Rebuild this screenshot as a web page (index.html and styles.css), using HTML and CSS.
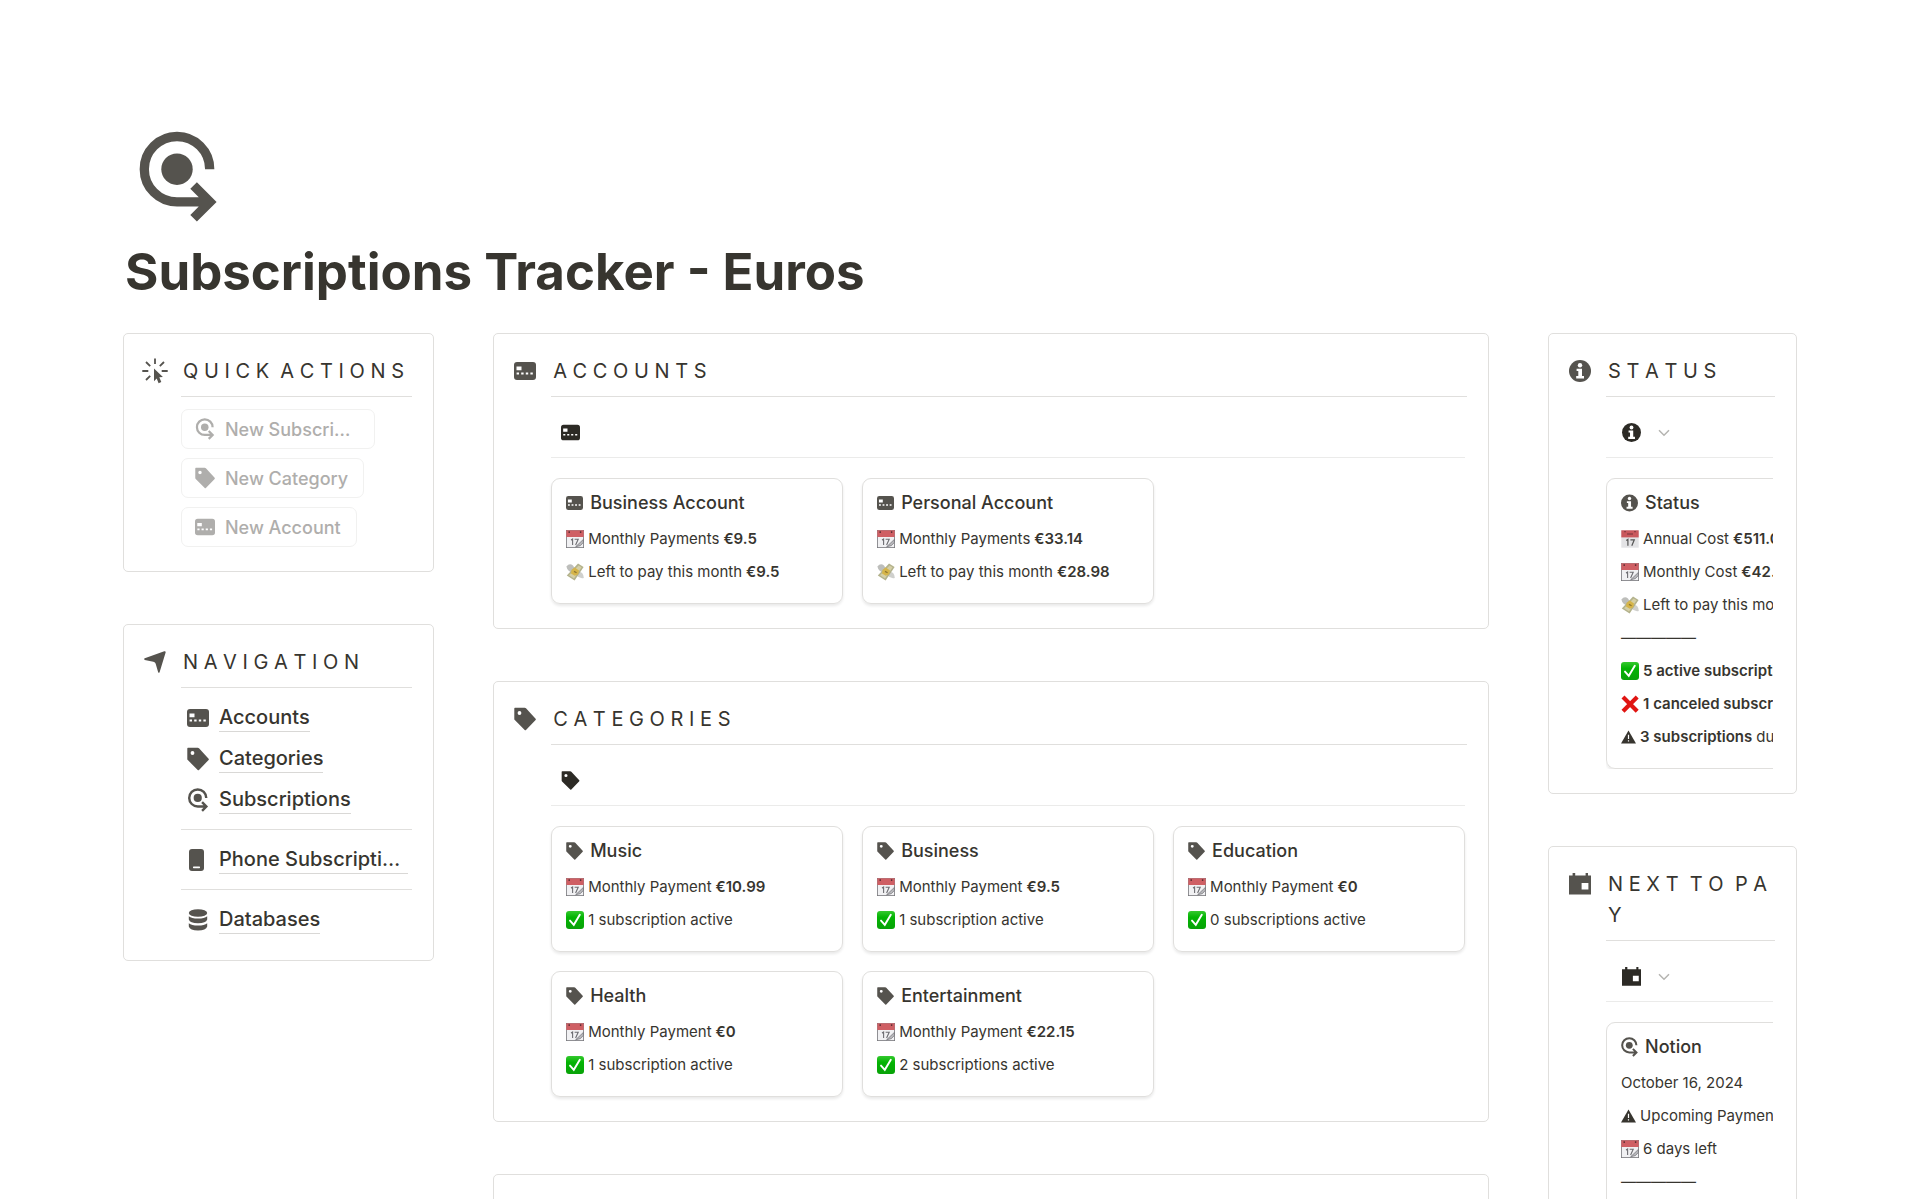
FILE: index.html
```html
<!DOCTYPE html>
<html lang="en">
<head>
    <meta charset="UTF-8">
    <meta name="viewport" content="width=device-width, initial-scale=1.0">
    <title>Subscriptions Tracker - Euros</title>
    <link rel="stylesheet" href="styles.css">
</head>
<body>

    <!-- Icon set -->
    <svg class="sprite" aria-hidden="true">
        <defs>
            <linearGradient id="green" x1="0" y1="0" x2="0" y2="1">
                <stop offset="0" stop-color="#35c92f"/>
                <stop offset="0.35" stop-color="#04b404"/>
                <stop offset="1" stop-color="#08a208"/>
            </linearGradient>
        </defs>
        <symbol id="subscription" viewBox="0 0 78 92">
            <path d="M70.7 38.2A32.7 32.7 0 1 0 38 70.9H70M54.6 54.5L71 70.9L54.6 87.3" fill="none" stroke="currentColor" stroke-width="9.3"/>
            <circle cx="38" cy="38.2" r="15.7" fill="currentColor"/>
        </symbol>
        <symbol id="card" viewBox="0 0 22 18">
            <rect width="22" height="18" rx="3" fill="currentColor"/>
            <path d="M2.5 4.5h5v3.7h-5zM2.6 10.6h2.4v2h-2.4zM7.2 10.6h2.4v2h-2.4zM11.8 10.6h2.4v2h-2.4zM16.4 10.6h2.4v2h-2.4z" fill="#fff"/>
        </symbol>
        <symbol id="tag" viewBox="0 0 22 23">
            <path fill="currentColor" fill-rule="evenodd" d="M1 0.3H10.7Q11.5 0.3 12 0.8L21.6 11.3Q22.1 11.9 21.6 12.5L12 22.4Q11.3 23 10.7 22.4L0.8 12.6Q0.3 12.1 0.3 11.4V1Q0.3 0.3 1 0.3zM5.5 3.6A1.9 1.9 0 1 0 5.5 7.4A1.9 1.9 0 1 0 5.5 3.6z"/>
        </symbol>
        <symbol id="info" viewBox="0 0 22 22">
            <circle cx="11" cy="11" r="11" fill="currentColor"/>
            <circle cx="11" cy="5.2" r="2.2" fill="#fff"/>
            <path d="M7.6 8.8H13V16H15V18.4H7.2V16H9.3V11.1H7.6z" fill="#fff"/>
        </symbol>
        <symbol id="calendar" viewBox="0 0 22 22">
            <path fill="currentColor" fill-rule="evenodd" d="M0 2.6H3.6V0H6.2V2.6H16.6V0H19V2.6H22V21.6H0zM12.6 10V16.6H19.4V10z"/>
        </symbol>
        <symbol id="click" viewBox="0 0 26 26">
            <path d="M13 0.5V6M0.3 13H6.3M19.7 13H25.7M4 4L8.2 8.2M22 4L17.8 8.2M4 22L8.2 17.8" fill="none" stroke="currentColor" stroke-width="1.8"/>
            <path d="M12 10.6L20.9 18.9L17.3 19.3L19.3 24L16.6 25.2L14.7 20.6L12 23.2z" fill="currentColor"/>
        </symbol>
        <symbol id="compass" viewBox="0 0 23 23">
            <path d="M0.8 7.7L21.2 0.3Q22.9 0 22.6 1.6L16.3 22.2Q15.5 23.4 14.8 22.2L12.2 13.4Q11.9 11.6 9.8 11.2L0.8 9.3Q-0.4 8.4 0.8 7.7z" fill="currentColor"/>
        </symbol>
        <symbol id="phone" viewBox="0 0 22 22">
            <rect x="2" width="15" height="22" rx="3" fill="currentColor"/>
            <rect x="6" y="17.4" width="7" height="1.8" rx="0.6" fill="#fff"/>
        </symbol>
        <symbol id="database" viewBox="0 0 22 22">
            <ellipse cx="11" cy="4" rx="9.2" ry="3.8" fill="currentColor"/>
            <path d="M1.8 7.2Q4.5 9.6 11 9.6T20.2 7.2V10.4Q19 14.2 11 14.2T1.8 10.4zM1.8 14.2Q4.5 16.6 11 16.6T20.2 14.2V17.6Q19 21.6 11 21.6T1.8 17.6z" fill="currentColor"/>
        </symbol>
        <symbol id="chevron" viewBox="0 0 12 8">
            <path d="M1 1.2L6 6.2L11 1.2" fill="none" stroke="currentColor" stroke-width="1.5"/>
        </symbol>
        <symbol id="emoji-date" viewBox="0 0 18 18">
            <rect x="0.3" y="0.3" width="17.4" height="17.4" fill="#e3e3e5"/>
            <path d="M0.3 0.3H17.7V7.4H0.3z" fill="#c9585d"/>
            <path d="M3 1.6H5M13 1.6H15M6 4H12" stroke="#8f3f45" stroke-width="1.4"/>
            <path d="M5.2 10.4L6.9 9.4V15.8M9.4 9.8H13.3L10.8 15.8" fill="none" stroke="#555" stroke-width="1.2"/>
        </symbol>
        <symbol id="emoji-calendar" viewBox="0 0 18 18">
            <rect x="0.4" y="0.4" width="17.2" height="17.2" fill="#f1f1f3" stroke="#77777b" stroke-width="0.8"/>
            <path d="M0.3 0.3H17.7V7H0.3z" fill="#cf5f64"/>
            <path d="M3.2 1.2V3M14.6 1.2V3" stroke="#5c3034" stroke-width="1.4"/>
            <path d="M5 10L6.6 9V15M8.6 9.2H12.2L9.6 15" fill="none" stroke="#6d6d72" stroke-width="1.1"/>
            <path d="M17.4 9.4L9.6 16.8L14.4 15.6L17.4 12.4z" fill="#b9b9bd" stroke="#6d6d72" stroke-width="0.7"/>
        </symbol>
        <symbol id="emoji-money" viewBox="0 0 18 18">
            <path d="M0.4 3.4Q3.4 -0.4 7 2.4L9.4 6.4L6.2 9.2Q1.6 8.6 0.4 3.4z" fill="#bdbebb"/>
            <path d="M11.2 8.6Q17.6 8.4 17.8 15Q13.6 16.2 10.2 12z" fill="#cfd0cd"/>
            <path d="M12 0.6L17.6 4L8.6 17.4L0.8 12.6z" fill="#b3b28c"/>
            <path d="M12.6 2.4L15.6 4.2L8 15.6L3 12.2z" fill="#d5cfa6"/>
            <path d="M5.6 6.8L8.8 4.4L13 7.4L12.2 11.2L8.8 12.8L5 10.4z" fill="#d6b549"/>
            <path d="M8 8.4L10.6 9.8" stroke="#8b7430" stroke-width="1.2"/>
        </symbol>
        <symbol id="emoji-check" viewBox="0 0 18 18">
            <rect width="18" height="18" rx="3" fill="url(#green)"/>
            <path d="M4 9.6L7.8 13.8L13.8 3.8" fill="none" stroke="#fff" stroke-width="1.9" stroke-linecap="round"/>
        </symbol>
        <symbol id="emoji-cross" viewBox="0 0 18 18">
            <path d="M2 2L16.2 16.2M16.2 2L2 16.2" stroke="#e01512" stroke-width="4.2"/>
        </symbol>
        <symbol id="warning" viewBox="0 0 15 14">
            <path d="M7.5 0.4L15 13.6H0z" fill="currentColor"/>
            <path d="M7.5 4.8V9M7.5 10.2V11.6" stroke="#fff" stroke-width="1.2"/>
        </symbol>
    </svg>

    <main class="page">
        <svg class="page-icon"><use href="#subscription"/></svg>
        <h1 class="page-title">Subscriptions Tracker - Euros</h1>

        <div class="columns">
            <div class="column">
                <section class="panel">
                    <svg class="panel-icon panel-icon-large"><use href="#click"/></svg>
                    <div class="panel-body">
                        <h2 class="panel-title">Q&nbsp;U&nbsp;I&nbsp;C&nbsp;K&nbsp;&nbsp;A&nbsp;C&nbsp;T&nbsp;I&nbsp;O&nbsp;N&nbsp;S</h2>
                        <div class="actions">
                            <button class="action" type="button"><svg class="icon-20"><use href="#subscription"/></svg><span>New Subscription</span></button>
                            <button class="action" type="button"><svg class="icon-20"><use href="#tag"/></svg><span>New Category</span></button>
                            <button class="action" type="button"><svg class="icon-20"><use href="#card"/></svg><span>New Account</span></button>
                        </div>
                    </div>
                </section>

                <section class="panel">
                    <svg class="panel-icon"><use href="#compass"/></svg>
                    <div class="panel-body">
                        <h2 class="panel-title">N&nbsp;A&nbsp;V&nbsp;I&nbsp;G&nbsp;A&nbsp;T&nbsp;I&nbsp;O&nbsp;N</h2>
                        <nav class="nav">
                            <a class="nav-link" href="#accounts"><svg class="icon-22"><use href="#card"/></svg><span>Accounts</span></a>
                            <a class="nav-link" href="#categories"><svg class="icon-22"><use href="#tag"/></svg><span>Categories</span></a>
                            <a class="nav-link" href="#subscriptions"><svg class="icon-22"><use href="#subscription"/></svg><span>Subscriptions</span></a>
                            <hr>
                            <a class="nav-link" href="#phone-subscriptions"><svg class="icon-22"><use href="#phone"/></svg><span>Phone Subscriptions</span></a>
                            <hr>
                            <a class="nav-link" href="#databases"><svg class="icon-22"><use href="#database"/></svg><span>Databases</span></a>
                        </nav>
                    </div>
                </section>
            </div>

            <div class="column">
                <section class="panel" id="accounts">
                    <svg class="panel-icon"><use href="#card"/></svg>
                    <div class="panel-body">
                        <h2 class="panel-title">A&nbsp;C&nbsp;C&nbsp;O&nbsp;U&nbsp;N&nbsp;T&nbsp;S</h2>
                        <div class="toolbar"><svg class="icon-19"><use href="#card"/></svg></div>
                        <div class="gallery">
                            <article class="card">
                                <h3 class="card-title"><svg class="icon-17"><use href="#card"/></svg>Business Account</h3>
                                <p><svg class="emoji"><use href="#emoji-calendar"/></svg>Monthly Payments <b>€9.5</b></p>
                                <p><svg class="emoji"><use href="#emoji-money"/></svg>Left to pay this month <b>€9.5</b></p>
                            </article>
                            <article class="card">
                                <h3 class="card-title"><svg class="icon-17"><use href="#card"/></svg>Personal Account</h3>
                                <p><svg class="emoji"><use href="#emoji-calendar"/></svg>Monthly Payments <b>€33.14</b></p>
                                <p><svg class="emoji"><use href="#emoji-money"/></svg>Left to pay this month <b>€28.98</b></p>
                            </article>
                        </div>
                    </div>
                </section>

                <section class="panel" id="categories">
                    <svg class="panel-icon"><use href="#tag"/></svg>
                    <div class="panel-body">
                        <h2 class="panel-title">C&nbsp;A&nbsp;T&nbsp;E&nbsp;G&nbsp;O&nbsp;R&nbsp;I&nbsp;E&nbsp;S</h2>
                        <div class="toolbar"><svg class="icon-19"><use href="#tag"/></svg></div>
                        <div class="gallery">
                            <article class="card">
                                <h3 class="card-title"><svg class="icon-17"><use href="#tag"/></svg>Music</h3>
                                <p><svg class="emoji"><use href="#emoji-calendar"/></svg>Monthly Payment <b>€10.99</b></p>
                                <p><svg class="emoji"><use href="#emoji-check"/></svg>1 subscription active</p>
                            </article>
                            <article class="card">
                                <h3 class="card-title"><svg class="icon-17"><use href="#tag"/></svg>Business</h3>
                                <p><svg class="emoji"><use href="#emoji-calendar"/></svg>Monthly Payment <b>€9.5</b></p>
                                <p><svg class="emoji"><use href="#emoji-check"/></svg>1 subscription active</p>
                            </article>
                            <article class="card">
                                <h3 class="card-title"><svg class="icon-17"><use href="#tag"/></svg>Education</h3>
                                <p><svg class="emoji"><use href="#emoji-calendar"/></svg>Monthly Payment <b>€0</b></p>
                                <p><svg class="emoji"><use href="#emoji-check"/></svg>0 subscriptions active</p>
                            </article>
                            <article class="card">
                                <h3 class="card-title"><svg class="icon-17"><use href="#tag"/></svg>Health</h3>
                                <p><svg class="emoji"><use href="#emoji-calendar"/></svg>Monthly Payment <b>€0</b></p>
                                <p><svg class="emoji"><use href="#emoji-check"/></svg>1 subscription active</p>
                            </article>
                            <article class="card">
                                <h3 class="card-title"><svg class="icon-17"><use href="#tag"/></svg>Entertainment</h3>
                                <p><svg class="emoji"><use href="#emoji-calendar"/></svg>Monthly Payment <b>€22.15</b></p>
                                <p><svg class="emoji"><use href="#emoji-check"/></svg>2 subscriptions active</p>
                            </article>
                        </div>
                    </div>
                </section>

                <section class="panel" id="subscriptions">
                    <svg class="panel-icon"><use href="#subscription"/></svg>
                </section>
            </div>

            <div class="column">
                <section class="panel">
                    <svg class="panel-icon"><use href="#info"/></svg>
                    <div class="panel-body">
                        <h2 class="panel-title">S&nbsp;T&nbsp;A&nbsp;T&nbsp;U&nbsp;S</h2>
                        <div class="toolbar">
                            <button class="view-button" type="button" aria-label="Status view"><svg class="icon-19"><use href="#info"/></svg><svg class="chevron"><use href="#chevron"/></svg></button>
                        </div>
                        <div class="gallery gallery-single">
                            <article class="card">
                                <h3 class="card-title"><svg class="icon-17"><use href="#info"/></svg>Status</h3>
                                <p><svg class="emoji"><use href="#emoji-date"/></svg>Annual Cost <b>€511.08</b></p>
                                <p><svg class="emoji"><use href="#emoji-calendar"/></svg>Monthly Cost <b>€42.59</b></p>
                                <p><svg class="emoji"><use href="#emoji-money"/></svg>Left to pay this month <b>€38.48</b></p>
                                <p>—————</p>
                                <p><svg class="emoji"><use href="#emoji-check"/></svg><b>5 active subscriptions</b></p>
                                <p><svg class="emoji"><use href="#emoji-cross"/></svg><b>1 canceled subscription</b></p>
                                <p><svg class="emoji emoji-small"><use href="#warning"/></svg><b>3 subscriptions</b> due</p>
                            </article>
                        </div>
                    </div>
                </section>

                <section class="panel">
                    <svg class="panel-icon"><use href="#calendar"/></svg>
                    <div class="panel-body">
                        <h2 class="panel-title">N&nbsp;E&nbsp;X&nbsp;T&nbsp;&nbsp;T&nbsp;O&nbsp;&nbsp;P&nbsp;A&nbsp;Y</h2>
                        <div class="toolbar">
                            <button class="view-button" type="button" aria-label="Next to pay view"><svg class="icon-19"><use href="#calendar"/></svg><svg class="chevron"><use href="#chevron"/></svg></button>
                        </div>
                        <div class="gallery gallery-single">
                            <article class="card">
                                <h3 class="card-title"><svg class="icon-17"><use href="#subscription"/></svg>Notion</h3>
                                <p>October 16, 2024</p>
                                <p><svg class="emoji emoji-small"><use href="#warning"/></svg>Upcoming Payment</p>
                                <p><svg class="emoji"><use href="#emoji-calendar"/></svg>6 days left</p>
                                <p>—————</p>
                            </article>
                        </div>
                    </div>
                </section>
            </div>
        </div>
    </main>

</body>
</html>
```
FILE: styles.css
```css
* {
    box-sizing: border-box;
}

body {
    font-family: Inter, 'Liberation Sans', sans-serif;
    background: #fff;
    color: #37352f;
    margin: 0;
}

h1,
h2,
h3,
p {
    margin: 0;
}

svg {
    display: block;
    flex-shrink: 0;
}

.sprite {
    position: absolute;
    width: 0;
    height: 0;
}

.page {
    padding: 131px 123px 0;
}

.page-icon {
    width: 78px;
    height: 92px;
    margin-left: 16px;
    color: #55534e;
}

.page-title {
    margin: 19px 0 31px 2px;
    font-size: 51px;
    line-height: 60px;
    font-weight: 700;
}

.columns {
    display: grid;
    grid-template-columns: 5fr 16fr 4fr;
    gap: 59px;
    align-items: start;
}

.column {
    display: flex;
    flex-direction: column;
    gap: 52px;
    min-width: 0;
}

/* Panels */

.panel {
    display: flex;
    padding: 22px 21px 24px 20px;
    border: 1px solid #e0dfdd;
    border-radius: 5px;
}

.panel-icon {
    width: 22px;
    height: 30px;
    margin-right: 15px;
    color: #55534e;
}

.panel-icon-large {
    width: 26px;
    margin: 0 13px 0 -2px;
}

.panel-body {
    flex: 1;
    min-width: 0;
}

.panel-title {
    padding: 0 0 9px 2px;
    border-bottom: 1px solid #e0dfdd;
    font-size: 20px;
    line-height: 31px;
    font-weight: 400;
    overflow-wrap: anywhere;
}

/* Quick actions */

.actions {
    display: flex;
    flex-direction: column;
    align-items: flex-start;
    gap: 9px;
    padding-top: 12px;
}

.action {
    display: flex;
    align-items: center;
    gap: 10px;
    height: 40px;
    padding: 0 15px 0 13px;
    border: 1px solid #f1f1f0;
    border-radius: 7px;
    background: #fff;
    color: #afaeac;
    font-family: inherit;
    font-size: 18px;
    font-weight: 500;
    cursor: pointer;
}

.action span {
    max-width: 134px;
    overflow: hidden;
    text-overflow: ellipsis;
    white-space: nowrap;
}

/* Navigation */

.nav {
    padding-top: 9px;
    margin-bottom: -4px;
}

.nav-link {
    display: flex;
    align-items: center;
    gap: 10px;
    height: 41px;
    padding: 0 4px 0 6px;
    color: #37352f;
    font-size: 20px;
    line-height: 28px;
    font-weight: 500;
    text-decoration: none;
}

.nav-link svg {
    color: #55534e;
}

.nav-link span {
    overflow: hidden;
    text-overflow: ellipsis;
    white-space: nowrap;
    border-bottom: 1px solid #d9d8d6;
}

.nav hr {
    margin: 9px 0;
    border: 0;
    border-top: 1px solid #e0dfdd;
}

/* Galleries */

.toolbar {
    display: flex;
    align-items: center;
    height: 61px;
    margin-right: 2px;
    padding: 11px 0 0 10px;
    border-bottom: 1px solid #ebebea;
    color: #2c2a25;
}

.view-button {
    display: flex;
    align-items: center;
    gap: 17px;
    padding: 0 6px;
    border: 0;
    background: none;
    color: inherit;
    cursor: pointer;
}

.chevron {
    width: 12px;
    height: 8px;
    color: #b5b4b1;
}

.gallery {
    display: grid;
    grid-template-columns: repeat(3, 1fr);
    gap: 19px;
    margin-right: 2px;
    padding-top: 20px;
}

.gallery-single {
    grid-template-columns: 293px;
    overflow: hidden;
}

.card {
    padding: 13px 14px 21px;
    border: 1px solid #e0dfdd;
    border-radius: 9px;
    box-shadow: 0 2px 3px rgba(15, 15, 15, 0.09);
    white-space: nowrap;
}

.card-title {
    display: flex;
    align-items: center;
    gap: 7px;
    margin-bottom: 15px;
    font-size: 18px;
    line-height: 22px;
    font-weight: 500;
}

.card-title svg {
    color: #55534e;
}

.card p {
    display: flex;
    align-items: center;
    gap: 4px;
    font-size: 15px;
    line-height: 20px;
}

.card p + p {
    margin-top: 13px;
}

.card b {
    font-weight: 600;
}

/* Icon sizes */

.emoji {
    width: 18px;
    height: 18px;
}

.emoji-small {
    width: 15px;
}

.icon-17 {
    width: 17px;
    height: 20px;
}

.icon-19 {
    width: 19px;
    height: 19px;
}

.icon-20 {
    width: 20px;
    height: 22px;
}

.icon-22 {
    width: 22px;
    height: 24px;
}
```
